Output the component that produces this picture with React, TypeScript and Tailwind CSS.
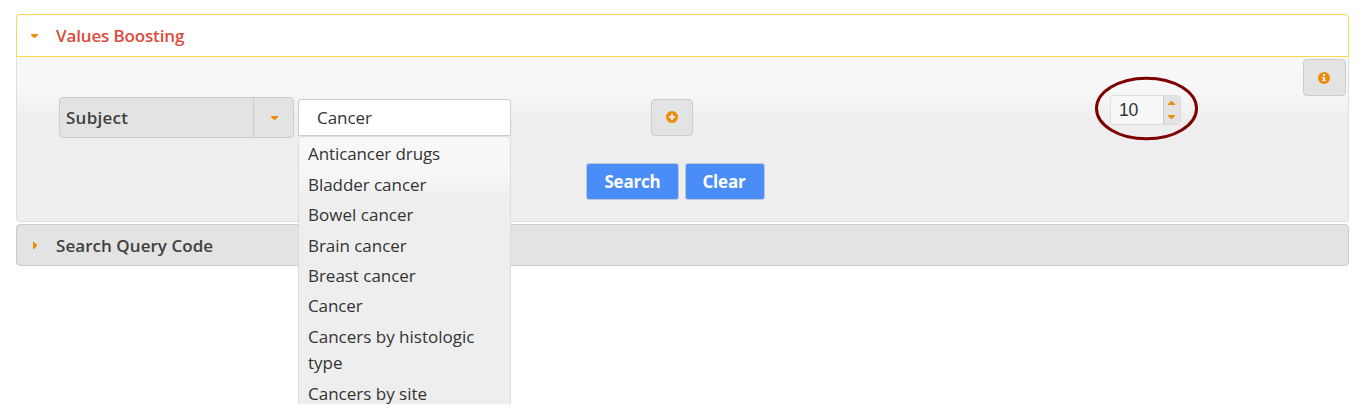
import React from 'react';

const suggestions = [
  { label: 'Anticancer drugs', style: 'tracking-[-0.1px]' },
  { label: 'Bladder cancer', style: 'tracking-[-0.05px]' },
  { label: 'Bowel cancer', style: 'tracking-[0.02px]' },
  { label: 'Brain cancer', style: 'tracking-[-0.04px]' },
  { label: 'Breast cancer', style: 'tracking-[-0.03px]' },
  { label: 'Cancer', style: 'tracking-[-0.1px]' },
  { label: 'Cancers by histologic type', style: 'tracking-[0px]' },
  { label: 'Cancers by site', style: 'tracking-[0px]' },
];

function Triangle({ dir }: { dir: 'up' | 'down' | 'right' }) {
  if (dir === 'right')
    return (
      <svg width="4" height="7" viewBox="0 0 4 7" className="block shrink-0">
        <path d="M0 0H1L4 3V4L1 7H0Z" fill="#ef8c08" />
      </svg>
    );
  return (
    <svg width="7" height="4" viewBox="0 0 7 4" className="block shrink-0">
      <path d={dir === 'down' ? 'M0 0H7V1L4 4H3L0 1Z' : 'M0 4H7V3L4 0H3L0 3Z'} fill="#ef8c08" />
    </svg>
  );
}

export default function App() {
  return (
    <div className="h-[404px] overflow-hidden bg-white pt-[14px] pr-[19px] pl-[16px] font-['Open_Sans',sans-serif] text-[17px] leading-[26.4px] text-[#333333]">
      <header className="flex h-[43px] items-center rounded-t-[4px] border border-[#fbd850] bg-white pl-[14px] font-semibold text-[#dd4b39]">
        <Triangle dir="down" />
        <h3 className="ml-[18px] pt-[2px] tracking-[-0.15px]">Values Boosting</h3>
      </header>

      <section className="h-[165px] rounded-b-[4px] border border-t-0 border-[#dddddd] bg-[linear-gradient(#f8f8f8_0,#f7f7f7_34px,#eeeeee_62px)]">
        <div className="flex items-start">
          <button className="mt-[40px] ml-[42px] flex h-[41px] w-[235px] rounded-[4px] border border-[#cccccc] bg-[#e3e3e3]">
            <span className="flex h-full flex-1 items-center pt-[2px] pl-[6px] font-semibold tracking-[0.25px] text-[#404040]">Subject</span>
            <span className="flex h-full w-[40px] items-center justify-center border-l border-[#cccccc] pl-[2px]">
              <Triangle dir="down" />
            </span>
          </button>

          <div className="relative mt-[42px] ml-[4px] w-[213px]">
            <div className="flex h-[37px] items-center rounded-t-[3px] border border-[#cccccc] bg-white pt-[2px] pl-[18px] font-medium tracking-[-0.05px]">Cancer</div>
            <ul className="absolute top-[37px] left-0 flex h-[400px] w-[213px] flex-col gap-[4px] rounded-t-[4px] border border-[#dddddd] bg-[linear-gradient(#f8f8f8_0,#f7f7f7_34px,#eeeeee_62px)] pt-[4.4px] pr-[12px] pl-[9px] font-medium">
              {suggestions.map((s) => (
                <li key={s.label} className={s.style}>{s.label}</li>
              ))}
            </ul>
          </div>

          <button className="mt-[42px] ml-[140px] flex h-[37px] w-[42px] items-center justify-center rounded-[4px] border border-[#cccccc] bg-[#e3e3e3] pb-px">
            <svg width="12" height="12" viewBox="0 0 12 12">
              <circle cx="6" cy="6" r="6" fill="#ef8c08" />
              <path d="M6 3V9M3 6H9" stroke="#eeeeee" strokeWidth="2" />
            </svg>
          </button>

          <div className="relative mt-[38px] ml-[417px] flex h-[30px] w-[71px] rounded-[4px] border border-[#dddddd] bg-[#f8f8f8]">
            <span className="flex flex-1 items-center pl-[8px] font-['Liberation_Sans',sans-serif] text-[17.6px] tracking-[-0.3px]">10</span>
            <span className="flex w-[17px] flex-col items-center justify-between rounded-r-[3px] border-l border-[#cccccc] bg-[#e3e3e3] pt-[5px] pr-px pb-[5px]">
              <Triangle dir="up" />
              <Triangle dir="down" />
            </span>
            <svg className="absolute -top-[20px] -left-[16px]" width="104" height="66" viewBox="0 0 104 66">
              <ellipse cx="51.5" cy="32.5" rx="50" ry="30.3" fill="none" stroke="#7f0000" strokeWidth="3" />
            </svg>
          </div>

          <button className="mt-[2px] mr-[2px] ml-auto flex h-[37px] w-[43px] items-center justify-center rounded-[4px] border border-[#cccccc] bg-[#e3e3e3] pr-px">
            <svg width="12" height="12" viewBox="0 0 12 12">
              <circle cx="6" cy="6" r="6" fill="#ef8c08" />
              <path d="M5 2H7V4H5ZM4 5H7V8H8V9H4V8H5V6H4Z" fill="#eeeeee" />
            </svg>
          </button>
        </div>

        <div className="mt-[25px] ml-[569px] flex gap-[6px] font-bold tracking-[-0.2px] text-white">
          <button className="h-[37px] w-[93px] rounded-[3px] border border-[#c0c8d8] bg-[#4b8df8] pt-[2px]">Search</button>
          <button className="h-[37px] w-[80px] rounded-[3px] border border-[#c0c8d8] bg-[#4b8df8] pt-[2px] pr-[2px]">Clear</button>
        </div>
      </section>

      <header className="mt-[2px] flex h-[42px] items-center rounded-[4px] border border-[#cccccc] bg-[#e3e3e3] pl-[16px] font-semibold text-[#404040]">
        <Triangle dir="right" />
        <h3 className="ml-[19px] pt-[2px] tracking-[0.05px]">Search Query Code</h3>
      </header>
    </div>
  );
}
